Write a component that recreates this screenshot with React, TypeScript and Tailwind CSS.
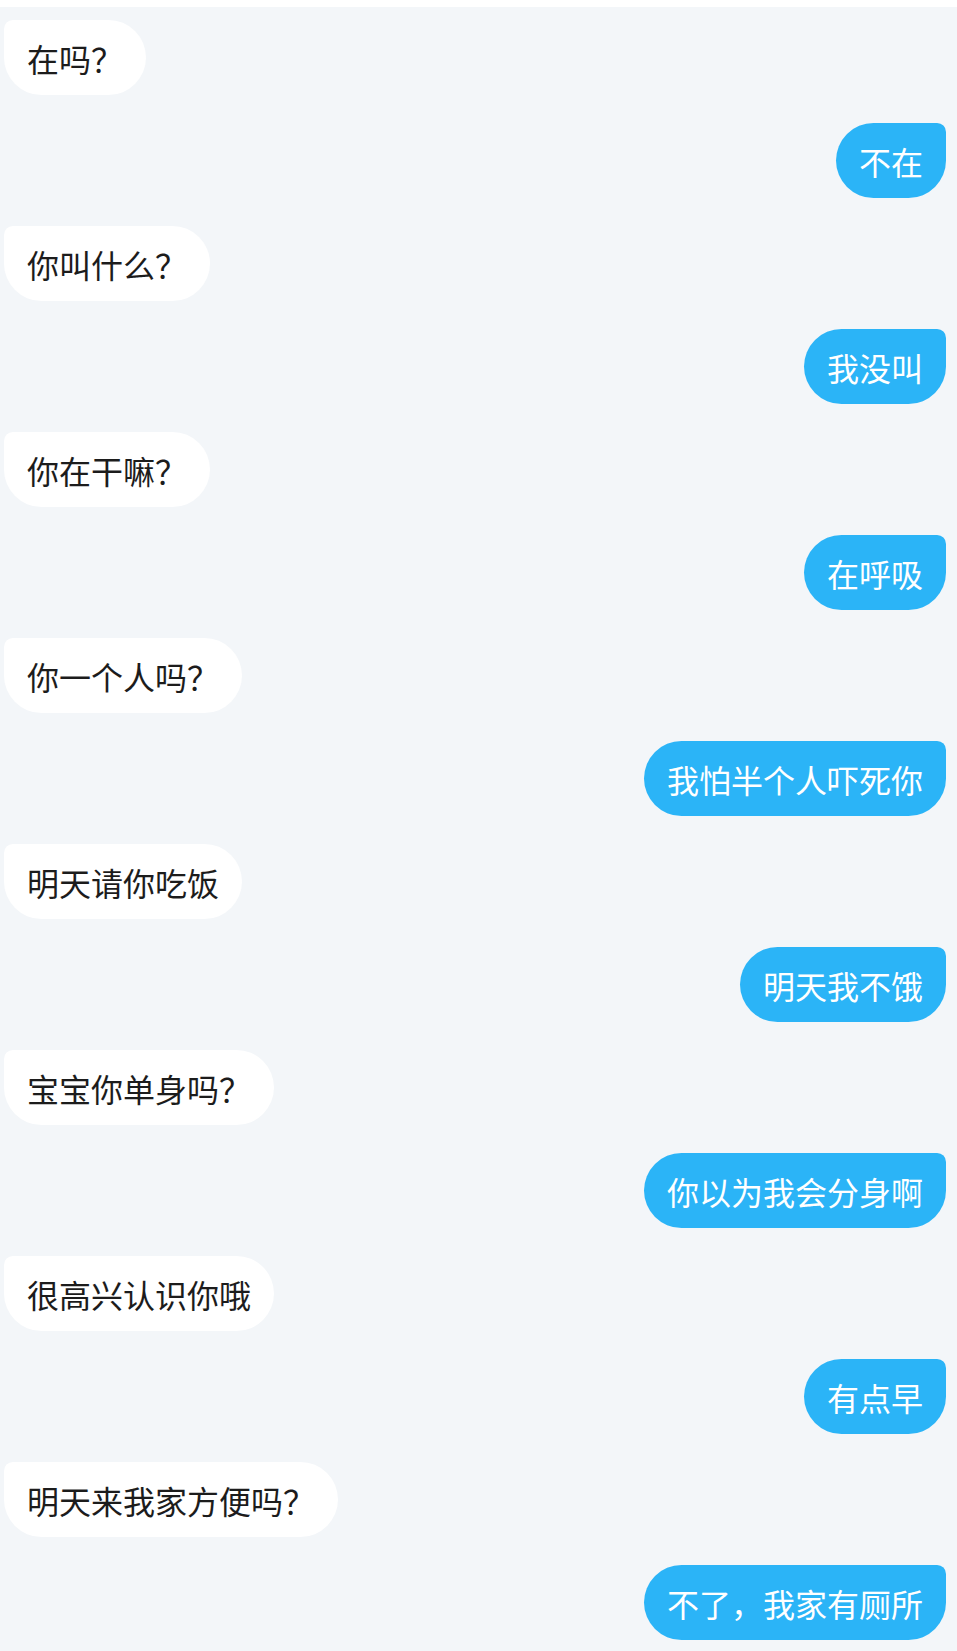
type Message = {
  text: string;
  mine: boolean;
};

const messages: Message[] = [
  { text: "在吗？", mine: false },
  { text: "不在", mine: true },
  { text: "你叫什么？", mine: false },
  { text: "我没叫", mine: true },
  { text: "你在干嘛？", mine: false },
  { text: "在呼吸", mine: true },
  { text: "你一个人吗？", mine: false },
  { text: "我怕半个人吓死你", mine: true },
  { text: "明天请你吃饭", mine: false },
  { text: "明天我不饿", mine: true },
  { text: "宝宝你单身吗？", mine: false },
  { text: "你以为我会分身啊", mine: true },
  { text: "很高兴认识你哦", mine: false },
  { text: "有点早", mine: true },
  { text: "明天来我家方便吗？", mine: false },
  { text: "不了，我家有厕所", mine: true },
];

function Bubble({ text, mine }: Message) {
  if (mine) {
    return (
      <div className="flex justify-end pr-[11px]">
        <div className="flex h-[75px] items-center rounded-[38px] rounded-tr-[9px] bg-[#2bb4f7] px-[23px] text-[32px] leading-none text-white">
          {text}
        </div>
      </div>
    );
  }

  return (
    <div className="flex justify-start pl-[4px]">
      <div className="flex h-[75px] items-center rounded-[38px] rounded-tl-[9px] bg-white px-[23px] text-[32px] leading-none text-[#1c1c1c]">
        {text}
      </div>
    </div>
  );
}

export default function App() {
  return (
    <div
      className="min-h-[1651px] w-[957px] bg-white"
      style={{ fontFamily: '"Noto Sans CJK SC", "Noto Sans", sans-serif' }}
    >
      <div className="mt-[7px] flex min-h-[1644px] flex-col gap-[28px] bg-[#f3f6f9] pt-[13px]">
        {messages.map((m, i) => (
          <Bubble key={i} text={m.text} mine={m.mine} />
        ))}
      </div>
    </div>
  );
}
